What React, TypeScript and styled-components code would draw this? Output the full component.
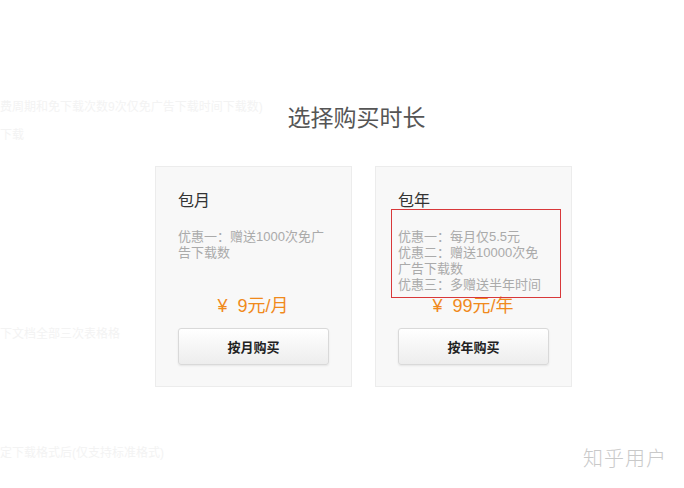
import React from 'react';
import styled, { createGlobalStyle } from 'styled-components';

const Global = createGlobalStyle`
  html, body { margin: 0; padding: 0; background: #fff; }
  body { font-family: "Liberation Sans", "Noto Sans CJK SC", sans-serif; }
`;

const Page = styled.div`
  position: relative;
  width: 684px;
  height: 488px;
  overflow: hidden;
  background: #fff;
`;

const Backdrop = styled.div`
  display: flex;
  flex-direction: column;
  padding-top: 100px;
`;

const GhostLine = styled.div<{ $top: number }>`
  margin-top: ${p => p.$top}px;
  font-size: 12px;
  line-height: 14px;
  color: #f3f3f3;
  white-space: nowrap;
`;

const Modal = styled.div`
  position: absolute;
  inset: 0;
  display: flex;
  flex-direction: column;
  padding: 103px 0 0 155px;
`;

const Title = styled.h2`
  margin: 0;
  width: 417px;
  padding-right: 14px;
  box-sizing: border-box;
  text-align: center;
  font-size: 23px;
  line-height: 30px;
  font-weight: normal;
  color: #555;
`;

const CardRow = styled.div`
  display: flex;
  gap: 23px;
  margin-top: 33px;
`;

const Card = styled.div`
  position: relative;
  box-sizing: border-box;
  width: 197px;
  height: 221px;
  padding: 24px 23px 21px 22px;
  background: #f8f8f8;
  border: 1px solid #ececec;
  display: flex;
  flex-direction: column;
`;

const CardTitle = styled.div`
  font-size: 16px;
  line-height: 20px;
  color: #333;
`;

const Desc = styled.div`
  margin-top: 18px;
  font-size: 13px;
  line-height: 16px;
  color: #aaa;
`;

const Spacer = styled.div`
  flex: 1;
`;

const Price = styled.div`
  text-align: center;
  font-size: 18px;
  line-height: 24px;
  color: #f08a1c;
  white-space: pre;
`;

const BuyButton = styled.button`
  margin-top: 10px;
  height: 37px;
  width: 151px;
  box-sizing: border-box;
  border: 1px solid #d9d9d9;
  border-radius: 3px;
  background: linear-gradient(#ffffff, #ededed);
  box-shadow: 0 1px 2px rgba(0, 0, 0, 0.08);
  font-family: inherit;
  font-size: 13px;
  font-weight: bold;
  color: #222;
  cursor: pointer;
`;

const Highlight = styled.div`
  position: absolute;
  left: 15px;
  top: 42px;
  width: 170px;
  height: 89px;
  box-sizing: border-box;
  border: 1px solid #d8383a;
  pointer-events: none;
`;

const Watermark = styled.div`
  position: absolute;
  right: 17px;
  bottom: 17px;
  font-size: 20px;
  line-height: 24px;
  letter-spacing: 1px;
  font-weight: 300;
  color: #c9c9c9;
`;

type Plan = {
  name: string;
  lines: string[];
  price: string;
  action: string;
  marked?: boolean;
};

const plans: Plan[] = [
  {
    name: '包月',
    lines: ['优惠一：赠送1000次免广告下载数'],
    price: '¥  9元/月',
    action: '按月购买',
  },
  {
    name: '包年',
    lines: ['优惠一：每月仅5.5元', '优惠二：赠送10000次免广告下载数', '优惠三：多赠送半年时间'],
    price: '¥  99元/年',
    action: '按年购买',
    marked: true,
  },
];

export default function App() {
  return (
    <Page>
      <Global />
      <Backdrop>
        <GhostLine $top={0}>费周期和免下载次数9次仅免广告下载时间下载数)</GhostLine>
        <GhostLine $top={14}>下载</GhostLine>
        <GhostLine $top={185}>下文档全部三次表格格</GhostLine>
        <GhostLine $top={105}>定下载格式后(仅支持标准格式)</GhostLine>
      </Backdrop>
      <Modal>
        <Title>选择购买时长</Title>
        <CardRow>
          {plans.map(p => (
            <Card key={p.name}>
              <CardTitle>{p.name}</CardTitle>
              <Desc>
                {p.lines.map(l => (
                  <div key={l}>{l}</div>
                ))}
              </Desc>
              <Spacer />
              <Price>{p.price}</Price>
              <BuyButton>{p.action}</BuyButton>
              {p.marked && <Highlight />}
            </Card>
          ))}
        </CardRow>
      </Modal>
      <Watermark>知乎用户</Watermark>
    </Page>
  );
}
